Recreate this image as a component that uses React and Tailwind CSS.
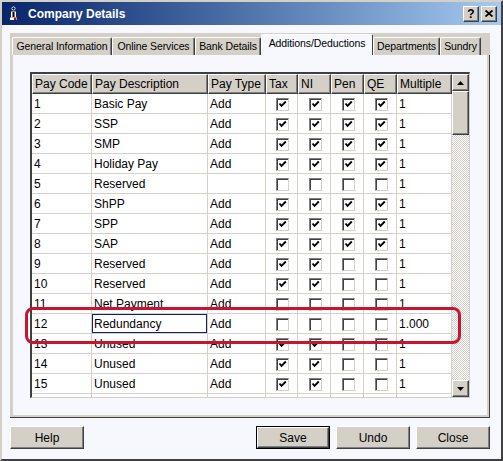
import React from "react";

const bevel =
  "bg-[#d4d0c8] border border-t-white border-l-white border-r-[#404040] border-b-[#404040] shadow-[inset_-1px_-1px_0_#808080]";

const tabs = [
  { label: "General Information", w: "w-[100px]" },
  { label: "Online Services", w: "w-[83px]" },
  { label: "Bank Details", w: "w-[66px]" },
  { label: "Additions/Deductions", w: "w-[112px]", active: true },
  { label: "Departments", w: "w-[67px]" },
  { label: "Sundry", w: "w-[41px]" },
];

const headers = ["Pay Code", "Pay Description", "Pay Type", "Tax", "NI", "Pen", "QE", "Multiple"];

const rows = [
  ["1", "Basic Pay", "Add", [1, 1, 1, 1], "1"],
  ["2", "SSP", "Add", [1, 1, 1, 1], "1"],
  ["3", "SMP", "Add", [1, 1, 1, 1], "1"],
  ["4", "Holiday Pay", "Add", [1, 1, 1, 1], "1"],
  ["5", "Reserved", "", [0, 0, 0, 0], "1"],
  ["6", "ShPP", "Add", [1, 1, 1, 1], "1"],
  ["7", "SPP", "Add", [1, 1, 1, 1], "1"],
  ["8", "SAP", "Add", [1, 1, 1, 1], "1"],
  ["9", "Reserved", "Add", [1, 1, 0, 0], "1"],
  ["10", "Reserved", "Add", [1, 1, 0, 0], "1"],
  ["11", "Net Payment", "Add", [0, 0, 0, 0], "1"],
  ["12", "Redundancy", "Add", [0, 0, 0, 0], "1.000"],
  ["13", "Unused", "Add", [1, 1, 0, 0], "1"],
  ["14", "Unused", "Add", [1, 1, 0, 0], "1"],
  ["15", "Unused", "Add", [1, 1, 0, 0], "1"],
  ["", "", "", [0, 0, 0, 0], ""],
];

function Check({ on }) {
  return (
    <span className="flex h-[13px] w-[13px] items-center justify-center border border-t-[#808080] border-l-[#808080] border-r-[#d4d0c8] border-b-[#d4d0c8] bg-white shadow-[inset_1px_1px_0_#404040]">
      {on ? (
        <svg width="11" height="11" viewBox="0 0 11 11">
          <path d="M2.5 4.5 L4.5 6.8 L8.8 2.5" stroke="#000" strokeWidth="1.9" fill="none" />
        </svg>
      ) : null}
    </span>
  );
}

function Cell({ children, className = "" }) {
  return (
    <div className={`flex h-[20px] items-center border-r border-b border-[#d4d0c8] bg-white pl-[2px] pt-[1px] text-[12px] text-black ${className}`}>
      {children}
    </div>
  );
}

function Button({ children, primary }) {
  const inner = (
    <div className={`flex h-full w-full items-center justify-center text-[12px] text-black ${bevel}`}>
      {children}
    </div>
  );
  if (primary) {
    return <div className="h-[23px] w-[74px] border border-black">{inner}</div>;
  }
  return <div className="h-[23px] w-[74px]">{inner}</div>;
}

export default function App() {
  return (
    <div className="relative flex h-[461px] w-[503px] flex-col border-2 border-t-[#d4d0c8] border-l-[#d4d0c8] border-r-[#404040] border-b-[#404040] bg-[#f6f8fd] font-['Liberation_Sans',Arial,sans-serif]">
      {/* Title bar */}
      <div className="flex h-[23px] items-center bg-linear-to-r from-[#0a246a] to-[#a6caf0] pl-[7px] pr-[4px]">
        <svg width="9" height="15" viewBox="0 0 9 15">
          <circle cx="4.5" cy="2.5" r="2" fill="#fff" />
          <circle cx="4.5" cy="2.5" r="1.2" fill="#000" />
          <rect x="2" y="5.5" width="5" height="6" fill="#fff" />
          <rect x="3.5" y="6" width="2" height="5" fill="#000" />
          <rect x="1" y="11.5" width="7" height="2.5" fill="#fff" />
          <rect x="5" y="11.5" width="2.5" height="2.5" fill="#d00" />
        </svg>
        <span className="ml-[10px] text-[12px] font-bold text-white">Company Details</span>
        <div className="ml-auto flex gap-[2px]">
          <div className={`flex h-[16px] w-[16px] items-center justify-center text-[12px] font-bold leading-none text-black ${bevel}`}>?</div>
          <div className={`flex h-[16px] w-[16px] items-center justify-center ${bevel}`}>
            <svg width="8" height="7" viewBox="0 0 8 7">
              <path d="M0.5 0.5 L7.5 6.5 M7.5 0.5 L0.5 6.5" stroke="#000" strokeWidth="1.8" />
            </svg>
          </div>
        </div>
      </div>

      <div className="flex flex-1 flex-col pl-[8px] pr-[11px]">
        {/* Tabs */}
        <div className="mt-[8px] flex h-[22px] items-end bg-[#d4d0c8] pl-[2px]">
          {tabs.map((t) =>
            t.active ? (
              <div
                key={t.label}
                className={`flex h-[21px] items-center justify-center rounded-t-[2px] border-t border-l border-r border-t-white border-l-white border-r-[#404040] bg-[#f6f8fd] pb-[2px] text-[10.5px] tracking-[-0.1px] text-black ${t.w}`}
              >
                {t.label}
              </div>
            ) : (
              <div
                key={t.label}
                className={`flex h-[18px] items-center justify-center rounded-t-[2px] border-t border-l border-r border-t-white border-l-white border-r-[#404040] bg-[#d4d0c8] text-[10.5px] tracking-[-0.1px] text-black shadow-[inset_-1px_0_0_#808080] ${t.w}`}
              >
                {t.label}
              </div>
            )
          )}
        </div>

        {/* Tab panel */}
        <div className="h-[363px] border-r border-b border-[#404040]">
          <div className="h-full border-l-[3px] border-r-2 border-b-2 border-[#d4d0c8] pt-[17px] pl-[17px]">
            <div className="flex h-[326px] w-[440px] border-l-2 border-t-2 border-r border-b border-l-[#404040] border-t-[#404040] border-r-[#d4d0c8] border-b-[#d4d0c8]">
              <div className="w-[420px] overflow-hidden">
                <div className="grid grid-cols-[60px_116px_58px_32px_33px_33px_33px_55px]">
                  {headers.map((h, i) => (
                    <div
                      key={h}
                      className={`flex h-[20px] items-center pl-[2px] text-[12px] text-black ${bevel} ${i < 2 ? "border-t-[#404040]" : ""}`}
                    >
                      {h}
                    </div>
                  ))}
                  {rows.map((r, ri) => (
                    <React.Fragment key={ri}>
                      <Cell>{r[0]}</Cell>
                      <Cell className={ri === 11 ? "shadow-[inset_0_0_0_1px_#0a246a]" : ""}>{r[1]}</Cell>
                      <Cell>{r[2]}</Cell>
                      {r[3].map((c, ci) => (
                        <Cell key={ci} className="justify-center pl-0">
                          <Check on={c} />
                        </Cell>
                      ))}
                      <Cell>{r[4]}</Cell>
                    </React.Fragment>
                  ))}
                </div>
              </div>

              {/* Scrollbar */}
              <div className="flex w-[17px] flex-col">
                <div className={`flex h-[17px] items-center justify-center ${bevel}`}>
                  <svg width="7" height="4" viewBox="0 0 7 4">
                    <path d="M3.5 0 L7 4 L0 4 Z" fill="#000" />
                  </svg>
                </div>
                <div className={`h-[44px] ${bevel}`} />
                <div className="flex-1 bg-[repeating-conic-gradient(#d4d0c8_0_25%,#ffffff_0_50%)] bg-[length:2px_2px]" />
                <div className={`flex h-[17px] items-center justify-center ${bevel}`}>
                  <svg width="7" height="4" viewBox="0 0 7 4">
                    <path d="M0 0 L7 0 L3.5 4 Z" fill="#000" />
                  </svg>
                </div>
              </div>
            </div>
          </div>
        </div>

        {/* Buttons */}
        <div className="mt-[8px] flex justify-between">
          <Button>Help</Button>
          <div className="flex gap-[6px]">
            <Button primary>Save</Button>
            <Button>Undo</Button>
            <Button>Close</Button>
          </div>
        </div>
      </div>

      {/* Highlight */}
      <div className="absolute left-[23px] top-[305px] h-[37px] w-[436px] rounded-[8px] border-[3px] border-[#c8142f]" />
    </div>
  );
}
